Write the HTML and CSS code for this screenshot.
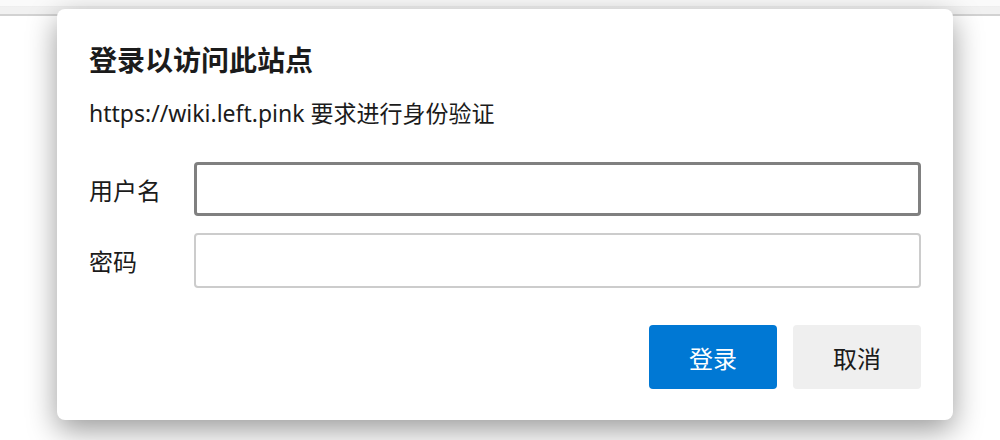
FILE: index.html
```html
<!DOCTYPE html>
<html lang="zh-CN">
<head>
    <meta charset="UTF-8">
    <meta name="viewport" content="width=device-width, initial-scale=1.0">
    <title>登录以访问此站点</title>
    <link rel="stylesheet" href="styles.css">
</head>
<body>

<div class="tab-strip"></div>

<div class="auth-dialog">
    <h1 class="auth-title">登录以访问此站点</h1>
    <p class="auth-origin">https://wiki.left.pink 要求进行身份验证</p>

    <form class="auth-form">
        <label for="username">用户名</label>
        <input type="text" id="username" class="field focused">
        <label for="password">密码</label>
        <input type="password" id="password" class="field">
    </form>

    <div class="auth-actions">
        <button type="button" class="btn btn-primary">登录</button>
        <button type="button" class="btn btn-secondary">取消</button>
    </div>
</div>

</body>
</html>
```

FILE: styles.css
```css
body {
    font-family: 'Noto Sans', 'Noto Sans CJK SC', sans-serif;
    margin: 0;
    padding: 0;
    background-color: #ffffff;
    color: #1b1b1b;
}

.tab-strip {
    height: 14px;
    background: linear-gradient(#fafafa 0, #fafafa 6px, #ececec 6px, #f1f1f1 7px, #f1f1f1 14px);
    border-bottom: 2px solid #d2d2d2;
}

.auth-dialog {
    position: absolute;
    left: 57px;
    top: 9px;
    width: 896px;
    box-sizing: border-box;
    padding: 32px 32px 31px;
    background: #ffffff;
    border-radius: 8px;
    box-shadow: 0 10px 30px rgba(0, 0, 0, 0.4);
}

.auth-title {
    margin: 0;
    font-size: 28px;
    line-height: 38px;
    font-weight: 700;
}

.auth-origin {
    margin: 18px 0 0;
    font-size: 23px;
    line-height: 32px;
}

.auth-form {
    display: grid;
    grid-template-columns: 105px 1fr;
    row-gap: 17px;
    align-items: center;
    margin-top: 33px;
    font-size: 24px;
}

.field {
    box-sizing: border-box;
    width: 100%;
    height: 55px;
    margin: 0;
    border: 2px solid #cccccc;
    border-radius: 4px;
    outline: none;
    font: inherit;
}

.field.focused {
    height: 54px;
    border: 3px solid #808080;
}

.auth-actions {
    display: flex;
    justify-content: flex-end;
    gap: 16px;
    margin-top: 37px;
}

.btn {
    width: 128px;
    height: 64px;
    border: none;
    border-radius: 4px;
    font-family: inherit;
    font-size: 24px;
    cursor: pointer;
}

.btn-primary {
    background-color: #0078d4;
    color: #ffffff;
}

.btn-secondary {
    background-color: #efefef;
    color: #1b1b1b;
}
```
